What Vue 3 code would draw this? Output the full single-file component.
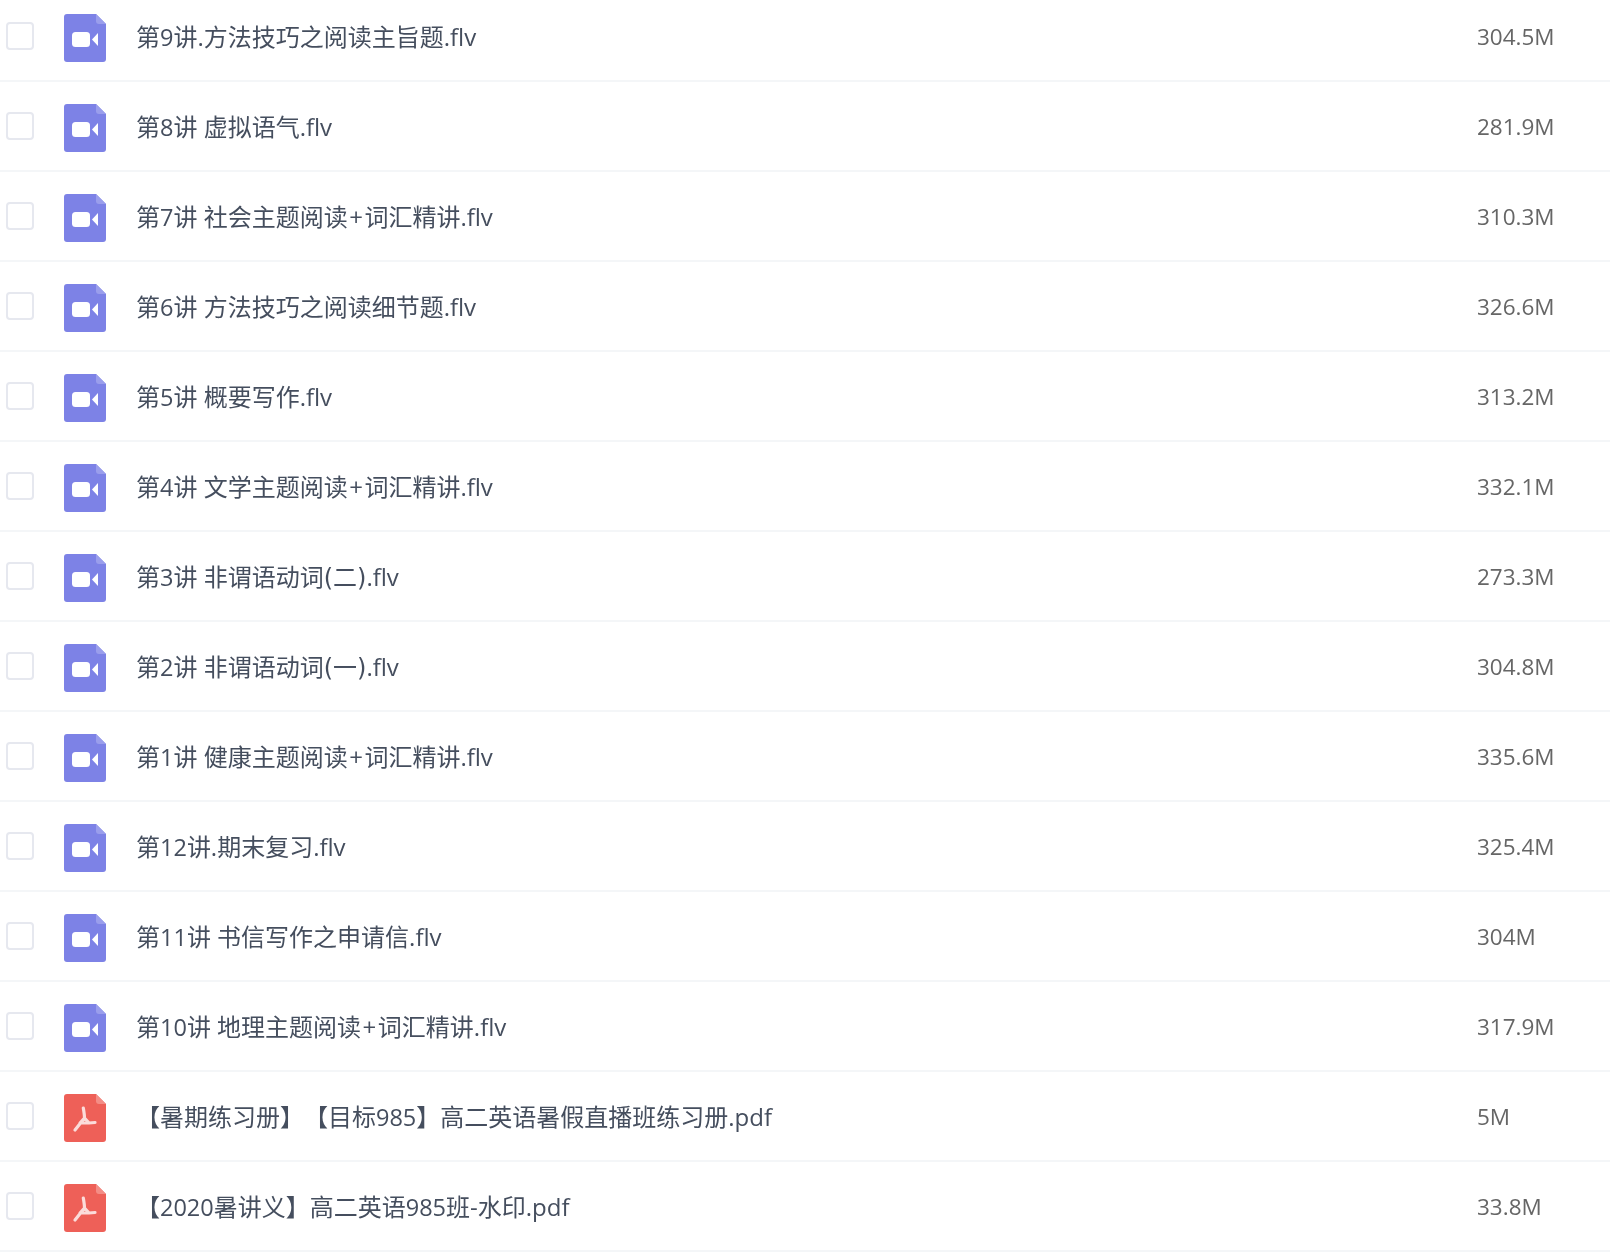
<script setup>
const files = [
  { name: '第9讲.方法技巧之阅读主旨题.flv', size: '304.5M', type: 'video' },
  { name: '第8讲 虚拟语气.flv', size: '281.9M', type: 'video' },
  { name: '第7讲 社会主题阅读+词汇精讲.flv', size: '310.3M', type: 'video' },
  { name: '第6讲 方法技巧之阅读细节题.flv', size: '326.6M', type: 'video' },
  { name: '第5讲 概要写作.flv', size: '313.2M', type: 'video' },
  { name: '第4讲 文学主题阅读+词汇精讲.flv', size: '332.1M', type: 'video' },
  { name: '第3讲 非谓语动词(二).flv', size: '273.3M', type: 'video' },
  { name: '第2讲 非谓语动词(一).flv', size: '304.8M', type: 'video' },
  { name: '第1讲 健康主题阅读+词汇精讲.flv', size: '335.6M', type: 'video' },
  { name: '第12讲.期末复习.flv', size: '325.4M', type: 'video' },
  { name: '第11讲 书信写作之申请信.flv', size: '304M', type: 'video' },
  { name: '第10讲 地理主题阅读+词汇精讲.flv', size: '317.9M', type: 'video' },
  { name: '【暑期练习册】【目标985】高二英语暑假直播班练习册.pdf', size: '5M', type: 'pdf' },
  { name: '【2020暑讲义】高二英语985班-水印.pdf', size: '33.8M', type: 'pdf' }
]

// digits and symbols get their own widths
const parts = (name) => name.split(/(\d+|[+()])/).filter(Boolean)
const partClass = (part) => {
  if (/\d/.test(part)) return 'num'
  if (part === '+') return 'plus'
  if (/[()]/.test(part)) return 'paren'
  return ''
}
</script>

<template>
  <div class="list">
    <div v-for="file in files" :key="file.name" class="row">
      <span class="check"></span>
      <svg class="icon" viewBox="0 0 42 48" width="42" height="48">
        <template v-if="file.type === 'video'">
          <path d="M3 0H32L42 10V45a3 3 0 0 1-3 3H3a3 3 0 0 1-3-3V3a3 3 0 0 1 3-3z" fill="#7d82e6" />
          <path d="M32 0L42 10H35a3 3 0 0 1-3-3z" fill="#9a9eec" />
          <rect x="8" y="18" width="18" height="15" rx="3.5" fill="#fff" />
          <path d="M28 25.500L34 19V32z" fill="#fff" />
        </template>
        <template v-else>
          <path d="M3 0H32L42 10V45a3 3 0 0 1-3 3H3a3 3 0 0 1-3-3V3a3 3 0 0 1 3-3z" fill="#ee6058" />
          <path d="M32 0L42 10H35a3 3 0 0 1-3-3z" fill="#f48d86" />
          <path d="M19.300 14C20 18 20.500 21 20.500 24L11 36M20.500 24L25 29H16L20.500 24M25 29L31 28.500" fill="none" stroke="#fbdcda" stroke-width="3.200" stroke-linecap="round" stroke-linejoin="round" />
        </template>
      </svg>
      <span class="name"><span v-for="(part, i) in parts(file.name)" :key="i" :class="partClass(part)">{{ part }}</span></span>
      <span class="size">{{ file.size }}</span>
    </div>
  </div>
</template>

<style scoped>
.list {
  margin-top: -8px;
  font-family: "Open Sans", "Noto Sans CJK SC", sans-serif;
  filter: blur(0.4px);
}

.row {
  display: flex;
  align-items: center;
  height: 88px;
  padding-left: 6px;
  border-bottom: 2px solid #f4f6f8;
}

.check {
  flex: 0 0 auto;
  box-sizing: border-box;
  width: 28px;
  height: 28px;
  margin-right: 30px;
  border: 2px solid #e6e8ef;
  border-radius: 4px;
  background: #fff;
}

.icon {
  flex: 0 0 auto;
  margin-top: 4px;
  margin-right: 30px;
}

.name {
  flex: 1;
  margin-bottom: 2px;
  font-size: 24px;
  color: #454e5e;
  text-spacing-trim: space-all;
}

.num {
  font-size: 23.5px;
}

.plus {
  margin: 0 1.5px;
}

.paren {
  font-family: "DejaVu Sans", sans-serif;
}

.size {
  flex: 0 0 133px;
  margin-top: 1px;
  font-size: 22.5px;
  color: #666;
}
</style>

<style>
html, body {
  background: #fff;
  overflow: hidden;
}
</style>
